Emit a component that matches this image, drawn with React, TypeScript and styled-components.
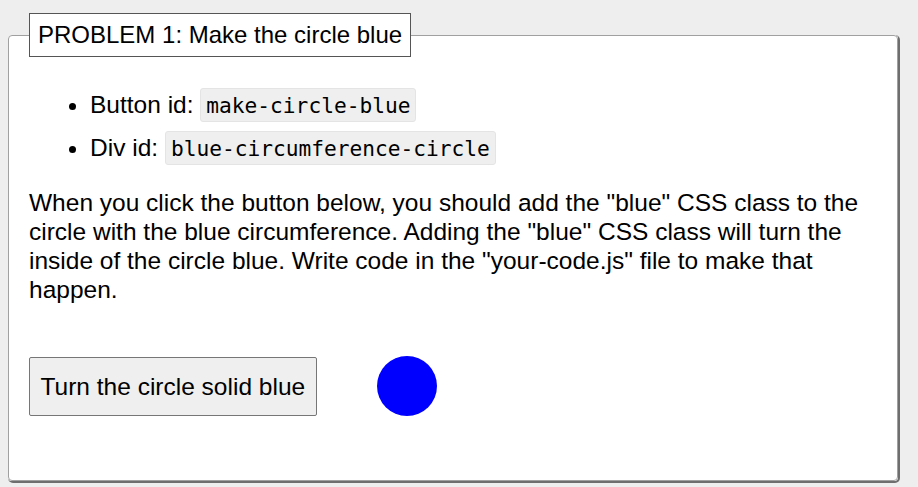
import React from "react";
import styled, { createGlobalStyle } from "styled-components";

const GlobalStyle = createGlobalStyle`
  html, body {
    margin: 0;
    padding: 0;
    background: #eeeeee;
  }
  body {
    padding: 8px;
    font-family: "Liberation Sans", Arial, sans-serif;
    font-size: 24.5px;
    color: #000;
  }
`;

const Panel = styled.fieldset`
  margin: 5px 0 0 0;
  width: 890px;
  box-sizing: border-box;
  padding: 0 19px 64px 20px;
  background: #ffffff;
  border: 1px solid #a0a0a0;
  border-radius: 4px;
  box-shadow: 1px 1px 0 1px #6e6e6e;
`;

const Legend = styled.legend`
  margin: 0;
  padding: 7px 8px;
  line-height: 28px;
  background: #ffffff;
  border: 1px solid #555555;
  font-size: 24px;
`;

const IdList = styled.ul`
  margin: 31px 0 23px 0;
  padding-left: 61px;
`;

const IdItem = styled.li`
  margin: 0 0 9px 0;
  line-height: 34px;
  &:last-child {
    margin-bottom: 0;
  }
`;

const Code = styled.code`
  display: inline-block;
  vertical-align: top;
  height: 34px;
  box-sizing: border-box;
  padding: 4px 5px;
  line-height: 26px;
  font-family: "DejaVu Sans Mono", "Liberation Mono", monospace;
  font-size: 21.2px;
  background: #efefef;
  border: 1px solid #e4e4e4;
  border-radius: 3px;
`;

const Text = styled.p`
  margin: 0 0 52px 0;
  line-height: 29px;
`;

const ActionRow = styled.div`
  display: flex;
  align-items: center;
  gap: 60px;
`;

const Button = styled.button`
  font-family: "Liberation Sans", Arial, sans-serif;
  font-size: 24.5px;
  line-height: 27px;
  padding: 15px 10.5px;
  color: #000;
  background: #efefef;
  border: 1px solid #767676;
  border-radius: 2px;
`;

const Circle = styled.div`
  width: 60px;
  height: 60px;
  border-radius: 50%;
  background: #0000ff;
`;

export default function App() {
  return (
    <>
      <GlobalStyle />
      <Panel>
        <Legend>PROBLEM 1: Make the circle blue</Legend>
        <IdList>
          <IdItem>
            Button id: <Code>make-circle-blue</Code>
          </IdItem>
          <IdItem>
            Div id: <Code>blue-circumference-circle</Code>
          </IdItem>
        </IdList>
        <Text>
          When you click the button below, you should add the "blue" CSS class
          to the circle with the blue circumference. Adding the "blue" CSS class
          will turn the inside of the circle blue. Write code in the
          "your-code.js" file to make that happen.
        </Text>
        <ActionRow>
          <Button>Turn the circle solid blue</Button>
          <Circle />
        </ActionRow>
      </Panel>
    </>
  );
}
